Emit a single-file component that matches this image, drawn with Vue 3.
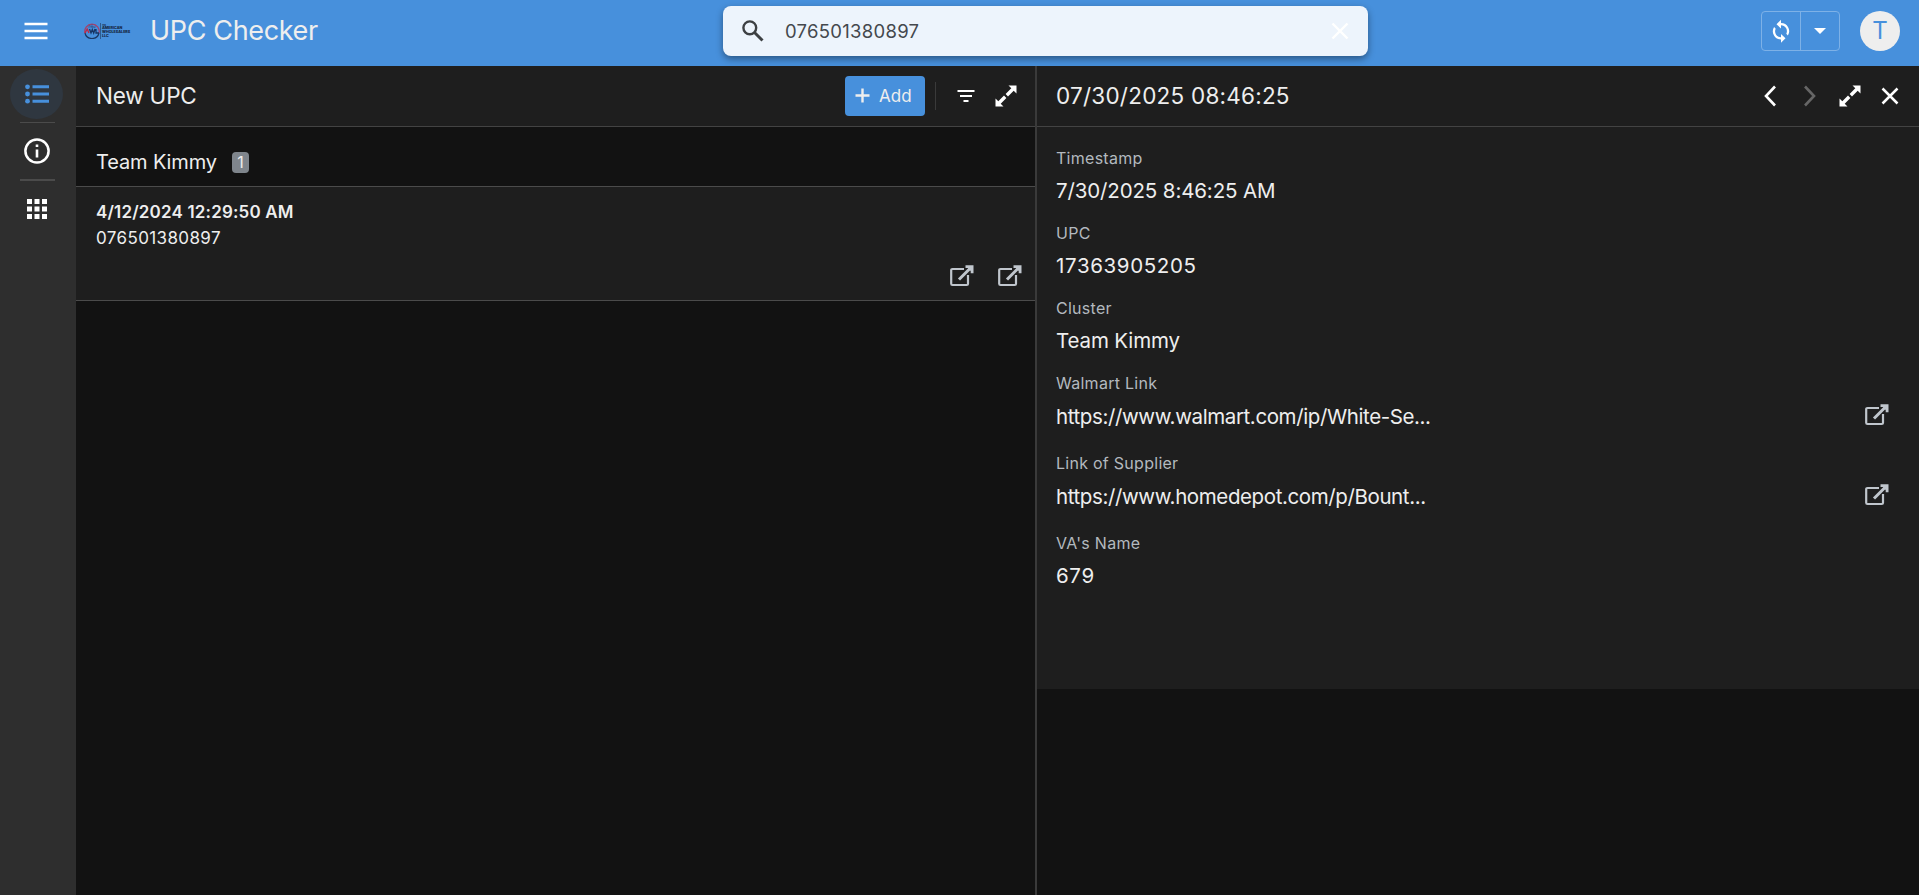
<template>
  <div class="app">
    <header class="app-bar">
      <button class="icon-btn menu-btn" aria-label="Menu">
        <svg width="24" height="18" viewBox="0 0 24 18">
          <path d="M.5 2h23M.5 9h23M.5 16h23" class="stroke" stroke-width="2.4" />
        </svg>
      </button>
      <div class="logo">
        <svg width="16" height="16" viewBox="0 0 16 16" fill="none">
          <path d="M1 10A7.2 7.2 0 1 1 15 10" stroke="#a73f68" stroke-width="1.2" />
          <path d="M1 10A7.2 7.2 0 0 0 15 10" stroke="#1c3763" stroke-width="1.2" />
          <path d="M4 4h8M5 2.5l6 2M8 1v4" stroke="#34588f" stroke-width=".7" />
          <path d="M1 10l2.2-4L5 10" stroke="#c02846" stroke-width="1.4" />
          <path d="M5.5 6l1.5 4 1.3-3.5L9.7 10 11 6M12 6v4h3" stroke="#173564" stroke-width="1.3" />
        </svg>
        <span class="logo-rule"></span>
        <span class="logo-text">
          <span class="logo-the">THE</span>
          <span>AMERICAN</span>
          <span>WHOLESALERS</span>
          <span>LLC</span>
        </span>
      </div>
      <h1 class="app-title">UPC Checker</h1>

      <div class="search">
        <svg width="24" height="24" viewBox="0 0 24 24" fill="none" stroke="#3d4043">
          <circle cx="8.8" cy="8.8" r="6.4" stroke-width="2.4" />
          <path d="M13.5 13.5l8 8" stroke-width="3" />
        </svg>
        <span class="search-text">{{ query }}</span>
        <svg class="search-clear" width="18" height="18" viewBox="0 0 18 18">
          <path d="M1.5 1.5l15 15M16.5 1.5l-15 15" class="stroke" stroke-width="2.4" />
        </svg>
      </div>

      <div class="sync-group">
        <button class="sync-btn" aria-label="Sync">
          <svg width="22" height="24" viewBox="0 0 22 24">
            <path
              d="M11 4V.8L6.500 5.200 11 9.500V6.300a5.900 5.900 0 0 1 5.300 8.500l1.600 1.600A8.100 8.100 0 0 0 11 4zM11 18.200a5.900 5.900 0 0 1-5.300-8.500L4.100 8.100A8.100 8.100 0 0 0 11 20.500v3.200l4.500-4.400L11 15z"
              fill="#fff"
            />
          </svg>
        </button>
        <button class="sync-btn" aria-label="More">
          <svg width="12" height="6" viewBox="0 0 12 6"><path d="M0 0h12L6 6z" fill="#fff" /></svg>
        </button>
      </div>
      <div class="avatar">T</div>
    </header>

    <div class="body">
      <nav class="rail">
        <button class="rail-btn active" aria-label="List">
          <svg width="24" height="20" viewBox="0 0 24 20" fill="#4790dc">
            <circle cx="2.500" cy="2.800" r="2.400" />
            <circle cx="2.500" cy="10" r="2.400" />
            <circle cx="2.500" cy="17.200" r="2.400" />
            <path d="M7.500 1.300H24v3H7.500zM7.500 8.500H24v3H7.500zM7.500 15.700H24v3H7.500z" />
          </svg>
        </button>
        <span class="rail-divider"></span>
        <button class="rail-btn" aria-label="About">
          <svg width="26" height="26" viewBox="0 0 26 26">
            <circle cx="13" cy="13" r="11.600" fill="none" stroke="#fff" stroke-width="2.500" />
            <path d="M11.700 6.500h2.600V9h-2.600zM11.700 11.500h2.600v8h-2.600z" fill="#fff" />
          </svg>
        </button>
        <span class="rail-divider thick"></span>
        <button class="rail-btn" aria-label="Apps">
          <svg width="20" height="20" viewBox="0 0 20 20" fill="#fff">
            <path d="M0 0h5v5H0zM7.500 0h5v5h-5zM15 0h5v5h-5zM0 7.500h5v5H0zM7.500 7.500h5v5h-5zM15 7.500h5v5h-5zM0 15h5v5H0zM7.500 15h5v5h-5zM15 15h5v5h-5z" />
          </svg>
        </button>
      </nav>

      <section class="list-pane">
        <div class="pane-bar">
          <h2 class="list-title">New UPC</h2>
          <button class="add-btn">
            <svg width="15" height="15" viewBox="0 0 15 15">
              <path d="M7.500 .5v14M.5 7.500h14" stroke="#eee" stroke-width="2.400" />
            </svg>
            <span>Add</span>
          </button>
          <span class="bar-divider"></span>
          <button class="icon-btn filter-btn" aria-label="Filter">
            <svg width="18" height="12" viewBox="0 0 18 12">
              <path d="M.5 1h17M3 6h12M6.500 11h5" class="stroke" stroke-width="2" />
            </svg>
          </button>
          <button class="icon-btn" aria-label="Expand">
            <svg width="22" height="22" viewBox="0 0 22 22"><path :d="expandPath" fill="#fff" /></svg>
          </button>
        </div>
        <div class="group-head">
          <span class="group-name">Team Kimmy</span>
          <span class="count">1</span>
        </div>
        <article v-for="row in rows" :key="row.title" class="row">
          <div class="row-title">{{ row.title }}</div>
          <div class="row-sub">{{ row.upc }}</div>
          <div class="row-actions">
            <svg v-for="n in 2" :key="n" width="24" height="22" viewBox="0 0 24 22">
              <path :d="openBox" class="open-line" />
              <path :d="openArrow" class="open-line arrow" />
              <path :d="openHead" fill="#c0c6cd" />
            </svg>
          </div>
        </article>
      </section>

      <section class="detail-pane">
        <div class="pane-bar detail-bar">
          <h2 class="detail-title">07/30/2025 08:46:25</h2>
          <div class="detail-nav">
            <svg width="12" height="22" viewBox="0 0 12 22">
              <path d="M11 1.500L2 11l9 9.500" class="stroke" stroke-width="2.600" />
            </svg>
            <svg class="next" width="12" height="22" viewBox="0 0 12 22">
              <path d="M1 1.500L10 11l-9 9.500" class="stroke dim" stroke-width="2.600" />
            </svg>
            <svg class="expand" width="22" height="22" viewBox="0 0 22 22">
              <path :d="expandPath" fill="#fff" />
            </svg>
            <svg class="close" width="18" height="18" viewBox="0 0 18 18">
              <path d="M1.500 1.500l15 15M16.500 1.500l-15 15" class="stroke" stroke-width="2.500" />
            </svg>
          </div>
        </div>
        <div class="fields">
          <div v-for="f in fields" :key="f.label" class="field" :class="f.type">
            <div class="label">{{ f.label }}</div>
            <div class="value">
              <span>{{ f.value }}</span>
              <svg v-if="f.type === 'link'" width="24" height="22" viewBox="0 0 24 22">
                <path :d="openBox" class="open-line" />
                <path :d="openArrow" class="open-line arrow" />
                <path :d="openHead" fill="#c0c6cd" />
              </svg>
            </div>
          </div>
        </div>
      </section>
    </div>
  </div>
</template>

<script setup>
import { ref } from 'vue'

const query = ref('076501380897')

const rows = [{ title: '4/12/2024 12:29:50 AM', upc: '076501380897' }]

const fields = [
  { label: 'Timestamp', value: '7/30/2025 8:46:25 AM', type: 'text' },
  { label: 'UPC', value: '17363905205', type: 'number' },
  { label: 'Cluster', value: 'Team Kimmy', type: 'text' },
  { label: 'Walmart Link', value: 'https://www.walmart.com/ip/White-Se...', type: 'link' },
  { label: 'Link of Supplier', value: 'https://www.homedepot.com/p/Bount...', type: 'link' },
  { label: "VA's Name", value: '679', type: 'number' },
]

const expandPath =
  'M13.500 0.500H21.500V8.500L18.700 5.700L13 11.400L10.600 9L16.300 3.300zM8.500 21.500H.5V13.500L3.300 16.300L9 10.600L11.400 13L5.700 18.700z'
const openBox = 'M14 4H2.500Q1.200 4 1.200 5.300V18.700Q1.200 20 2.500 20H16.700Q18 20 18 18.700V10'
const openArrow = 'M9 14.500L20.500 3'
const openHead = 'M15.500 .3H23.500V8.300H20.700V6L17.800 3.100H15.500z'
</script>

<style>
body {
  background: #121212;
}
</style>

<style scoped>
.app {
  height: 895px;
  display: flex;
  flex-direction: column;
  overflow: hidden;
  font-family: Inter, 'Liberation Sans', sans-serif;
  color: #eee;
  background: #121212;
}

button {
  padding: 0;
  border: 0;
  background: none;
  color: inherit;
  font: inherit;
}

svg {
  display: block;
  flex: none;
}

h1,
h2 {
  margin: 0;
  font-weight: 400;
  white-space: nowrap;
}

.stroke {
  stroke: #fff;
  fill: none;
}

.stroke.dim {
  stroke: #666;
}

.app-bar {
  height: 66px;
  flex: none;
  box-sizing: border-box;
  padding: 0 19px 4px 24px;
  display: flex;
  align-items: center;
  background: #4790dc;
}

.menu-btn {
  width: 60px;
}

.logo {
  width: 66px;
  display: flex;
  align-items: center;
}

.logo-rule {
  width: 1px;
  height: 16px;
  margin: 0 1px 0 0;
  background: #2c5b93;
}

.logo-text {
  display: flex;
  flex-direction: column;
  font-size: 3.7px;
  line-height: 4px;
  font-weight: 800;
  color: #14243c;
}

.logo-the {
  font-size: 2px;
  line-height: 2px;
}

.app-title {
  width: 573px;
  font-size: 27px;
  letter-spacing: -0.35px;
  line-height: 60px;
}

.search {
  width: 645px;
  height: 50px;
  box-sizing: border-box;
  padding: 0 19px 0 18px;
  display: flex;
  align-items: center;
  border-radius: 8px;
  background: #edf4fc;
  box-shadow: 0 3px 7px rgba(0, 0, 0, 0.4);
}

.search-text {
  margin-left: 20px;
  font-size: 18.5px;
  letter-spacing: 0.28px;
  color: #44484d;
}

.search-clear {
  margin-left: auto;
}

.sync-group {
  width: 79px;
  height: 40px;
  margin-left: auto;
  box-sizing: border-box;
  display: flex;
  border: 1px solid #7db1e7;
  border-radius: 4px;
}

.sync-btn {
  flex: 1;
  display: flex;
  align-items: center;
  justify-content: center;
}

.sync-btn + .sync-btn {
  border-left: 1px solid #7db1e7;
}

.avatar {
  width: 40px;
  height: 40px;
  margin-left: 20px;
  border-radius: 50%;
  background: #eee;
  color: #4790dc;
  font-size: 24px;
  line-height: 40px;
  text-align: center;
}

.body {
  flex: 1;
  min-height: 0;
  display: flex;
}

.rail {
  width: 76px;
  flex: none;
  box-sizing: border-box;
  padding: 3px 3px 0 0;
  display: flex;
  flex-direction: column;
  align-items: center;
  background: #2e2e2e;
}

.rail-btn {
  width: 53px;
  height: 50px;
  display: flex;
  align-items: center;
  justify-content: center;
  border-radius: 50%;
}

.rail-btn.active {
  background: #2f3740;
  padding-bottom: 1px;
}

.rail-divider {
  width: 35px;
  height: 1px;
  margin: 3px 0 3px 2px;
  background: #4b4b4b;
}

.rail-divider.thick {
  height: 2px;
}

.list-pane {
  width: 959px;
  flex: none;
  border-right: 2px solid #3a3a3a;
}

.pane-bar {
  height: 61px;
  box-sizing: border-box;
  padding: 0 18px 1px 20px;
  display: flex;
  align-items: center;
  border-bottom: 1px solid #434343;
  background: #1e1e1e;
}

.list-title,
.detail-title {
  font-size: 22.5px;
}

.list-title {
  letter-spacing: -0.2px;
}

.detail-title {
  letter-spacing: 0.23px;
}

.add-btn {
  width: 80px;
  height: 40px;
  margin-left: auto;
  box-sizing: border-box;
  padding-left: 10px;
  display: flex;
  align-items: center;
  gap: 9px;
  border-radius: 4px;
  background: #4790dc;
  font-size: 17px;
}

.bar-divider {
  width: 1px;
  height: 28px;
  margin-left: 10px;
  background: #3a3a3a;
}

.filter-btn {
  margin: 0 20px 0 21px;
}

.group-head {
  height: 60px;
  box-sizing: border-box;
  padding: 11px 20px 0;
  display: flex;
  align-items: center;
  border-bottom: 1px solid #4b4b4b;
}

.group-name {
  font-size: 20px;
  letter-spacing: -0.12px;
}

.count {
  width: 17px;
  height: 21px;
  margin-left: 15px;
  border-radius: 4px;
  background: #7f858c;
  font-size: 16px;
  line-height: 21px;
  text-align: center;
}

.row {
  height: 114px;
  box-sizing: border-box;
  padding: 12px 13px 0 20px;
  border-bottom: 1px solid #4b4b4b;
  background: #1e1e1e;
}

.row-title {
  font-size: 17px;
  font-weight: 600;
  letter-spacing: 0.17px;
  line-height: 26px;
}

.row-sub {
  font-size: 17px;
  letter-spacing: 0.38px;
  line-height: 26px;
}

.row-actions {
  margin-top: 14px;
  display: flex;
  justify-content: flex-end;
  gap: 24px;
}

.open-line {
  fill: none;
  stroke: #c0c6cd;
  stroke-width: 2.2;
}

.open-line.arrow {
  stroke-width: 3;
}

.detail-pane {
  flex: 1;
  min-width: 0;
}

.detail-bar {
  padding-right: 20px;
  padding-left: 19px;
}

.detail-nav {
  margin-left: auto;
  display: flex;
  align-items: center;
}

.next {
  margin-left: 28px;
}

.expand {
  margin-left: 23px;
}

.close {
  margin-left: 20px;
}

.fields {
  height: 562px;
  box-sizing: border-box;
  padding: 15px 30px 0 19px;
  background: #1e1e1e;
}

.field {
  height: 75px;
}

.field.link {
  height: 80px;
}

.label {
  font-size: 16px;
  letter-spacing: 0.27px;
  line-height: 32px;
  color: #b3b9bf;
}

.value {
  height: 32px;
  display: flex;
  align-items: center;
  justify-content: space-between;
  font-size: 20.5px;
  letter-spacing: -0.13px;
  white-space: nowrap;
}

.number .value {
  letter-spacing: 0.64px;
}

.link .value {
  height: 34px;
  letter-spacing: -0.39px;
}

.value svg {
  margin-bottom: 2px;
}
</style>
